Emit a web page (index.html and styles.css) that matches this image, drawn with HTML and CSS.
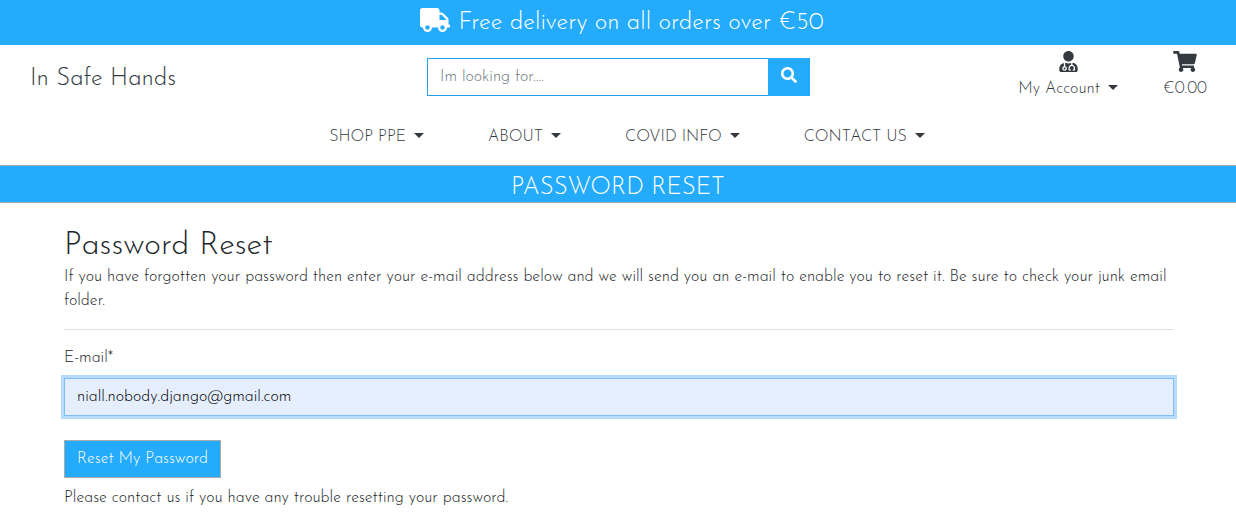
FILE: index.html
```html
<!DOCTYPE html>
<html lang="en">
<head>
<meta charset="utf-8">
<meta name="viewport" content="width=device-width, initial-scale=1">
<title>In Safe Hands</title>
<link rel="stylesheet" href="styles.css">
</head>
<body>
<div class="delivery-banner">
  <svg class="icon-truck" viewBox="0 0 640 512" aria-hidden="true"><path d="M624 352h-16V243.900c0-12.700-5.100-24.900-14.100-33.900L494 110.100c-9-9-21.200-14.100-33.900-14.100H416V48c0-26.500-21.500-48-48-48H48C21.500 0 0 21.500 0 48v320c0 26.500 21.500 48 48 48h16c0 53 43 96 96 96s96-43 96-96h128c0 53 43 96 96 96s96-43 96-96h48c8.800 0 16-7.200 16-16v-32c0-8.800-7.200-16-16-16zM160 464c-26.500 0-48-21.500-48-48s21.500-48 48-48 48 21.500 48 48-21.500 48-48 48zm320 0c-26.500 0-48-21.500-48-48s21.500-48 48-48 48 21.500 48 48-21.500 48-48 48zm80-208H416V144h44.100l99.900 99.900V256z"/></svg>
  <span>Free delivery on all orders over €50</span>
</div>
<header class="site-header">
  <div class="header-top">
    <a class="brand" href="#">In Safe Hands</a>
    <form class="search">
      <input class="search-input" type="text" placeholder="Im looking for...." aria-label="Search">
      <button class="search-button" type="button" aria-label="Submit search">
        <svg class="icon-search" viewBox="0 0 512 512" aria-hidden="true"><path d="M505 442.700L405.300 343c-4.500-4.500-10.600-7-17-7H372c27.600-35.300 44-79.700 44-128C416 93.100 322.900 0 208 0S0 93.100 0 208s93.100 208 208 208c48.300 0 92.700-16.400 128-44v16.300c0 6.400 2.500 12.500 7 17l99.700 99.700c9.400 9.400 24.600 9.400 33.900 0l28.300-28.300c9.400-9.400 9.400-24.600.1-34zM208 336c-70.700 0-128-57.200-128-128 0-70.700 57.200-128 128-128 70.700 0 128 57.200 128 128 0 70.700-57.200 128-128 128z"/></svg>
      </button>
    </form>
    <div class="account-links">
      <button class="account-link" type="button">
        <svg class="icon-user" viewBox="0 0 448 512" aria-hidden="true"><path d="M224 256c70.700 0 128-57.300 128-128S294.700 0 224 0 96 57.300 96 128s57.300 128 128 128zM104 424c0 13.300 10.700 24 24 24s24-10.700 24-24-10.700-24-24-24-24 10.700-24 24zm216-135.400v49c36.500 7.400 64 39.800 64 78.400v41.700c0 7.600-5.400 14.200-12.900 15.700l-32.200 6.400c-4.300.9-8.500-1.900-9.400-6.300l-3.100-15.700c-.9-4.300 1.900-8.600 6.300-9.400l19.300-3.900V416c0-62.800-96-65.100-96 1.900v26.700l19.300 3.900c4.300.9 7.100 5.100 6.300 9.400l-3.100 15.700c-.9 4.300-5.100 7.100-9.400 6.300l-31.200-4.200c-7.900-1.100-13.800-7.800-13.800-15.900V416c0-38.600 27.500-70.900 64-78.400v-45.200c-2.200.7-4.400 1.100-6.600 1.900-18 6.300-37.300 9.800-57.400 9.800s-39.400-3.500-57.400-9.800c-7.400-2.600-14.900-4.200-22.600-5.200v81.600c23.100 6.900 40 28.100 40 53.400 0 30.900-25.100 56-56 56s-56-25.100-56-56c0-25.300 16.900-46.500 40-53.400v-80.400C48.500 301 0 355.800 0 422.400v44.800C0 491.900 20.100 512 44.800 512h358.400c24.700 0 44.800-20.100 44.800-44.800v-44.800c0-72-56.800-130.300-128-133.800z"/></svg>
        <span class="toggle-label">My Account <span class="caret"></span></span>
      </button>
      <a class="account-link" href="#">
        <svg class="icon-cart" viewBox="0 0 576 512" aria-hidden="true"><path d="M528.120 301.319l47.273-208C578.806 78.301 567.391 64 551.990 64H159.208l-9.166-44.810C147.758 8.021 137.930 0 126.529 0H24C10.745 0 0 10.745 0 24v16c0 13.255 10.745 24 24 24h69.883l70.248 343.435C147.325 417.100 136 435.222 136 456c0 30.928 25.072 56 56 56s56-25.072 56-56c0-15.674-6.447-29.835-16.824-40h209.647C430.447 426.165 424 440.326 424 456c0 30.928 25.072 56 56 56s56-25.072 56-56c0-22.172-12.888-41.332-31.579-50.405l5.517-24.276c3.413-15.018-8.002-29.319-23.403-29.319H218.117l-6.545-32h293.145c11.206 0 20.920-7.754 23.403-18.681z"/></svg>
        <span>€0.00</span>
      </a>
    </div>
  </div>
  <nav class="main-nav" aria-label="Main">
    <button class="nav-item toggle-label" type="button">SHOP PPE <span class="caret"></span></button>
    <button class="nav-item toggle-label" type="button">ABOUT <span class="caret"></span></button>
    <button class="nav-item toggle-label" type="button">COVID INFO <span class="caret"></span></button>
    <button class="nav-item toggle-label" type="button">CONTACT US <span class="caret"></span></button>
  </nav>
</header>
<div class="page-title">PASSWORD RESET</div>
<main class="content">
  <h1 class="heading">Password Reset</h1>
  <p class="text">If you have forgotten your password then enter your e-mail address below and we will send you an e-mail to enable you to reset it. Be sure to check your junk email folder.</p>
  <hr class="divider">
  <form class="reset-form">
    <label class="label" for="email">E-mail*</label>
    <input class="email-input" id="email" type="text" inputmode="email" value="niall.nobody.django@gmail.com">
    <button class="reset-button" type="button">Reset My Password</button>
  </form>
  <p class="text">Please contact us if you have any trouble resetting your password.</p>
</main>
<script src="script.js"></script>
</body>
</html>
```

FILE: styles.css
```css
* {
  box-sizing: border-box;
}

body {
  margin: 0;
  background: #fff;
  color: #212529;
  font-family: "Josefin Sans", Lato, sans-serif;
  font-size: 16px;
  font-weight: 300;
  line-height: 24px;
}

button,
input {
  margin: 0;
  border-radius: 0;
  font: inherit;
}

button {
  cursor: pointer;
}

svg {
  display: block;
  fill: currentColor;
}

.delivery-banner {
  display: flex;
  justify-content: center;
  align-items: flex-start;
  gap: 8px;
  padding: 8px 8px 7px 16px;
  background: #24abfc;
  color: #fff;
  font-size: 24px;
  line-height: 30px;
}

.icon-truck {
  width: 30px;
  height: 24px;
}

.site-header {
  color: #343a40;
}

.header-top {
  display: grid;
  grid-template-columns: repeat(3, 1fr);
  align-items: start;
}

.brand {
  padding: 19px 30px 0;
  color: inherit;
  font-size: 24px;
  line-height: 30px;
  text-decoration: none;
}

.search {
  display: flex;
  padding: 13px 14px 0 15px;
}

.search-input {
  flex: 1;
  min-width: 0;
  height: 38px;
  padding: 0 12px;
  border: 1px solid #24a0ed;
  border-right: 0;
  background: #fff;
  color: #495057;
}

.search-input::placeholder {
  color: #6c757d;
  opacity: 1;
}

.search-button {
  display: flex;
  justify-content: center;
  align-items: center;
  width: 42px;
  padding: 0 0 4px;
  border: 0;
  background: #24abfc;
  color: #fff;
}

.icon-search {
  width: 16px;
  height: 16px;
}

.account-links {
  display: flex;
  justify-content: flex-end;
  gap: 45px;
  padding: 6px 29px 0 0;
}

.account-link {
  display: flex;
  flex-direction: column;
  align-items: center;
  gap: 5px;
  padding: 0;
  border: 0;
  background: none;
  color: inherit;
  text-decoration: none;
}

.icon-user {
  width: 19px;
  height: 21px;
}

.icon-cart {
  width: 24px;
  height: 21px;
}

.toggle-label {
  display: flex;
  align-items: center;
  gap: 8px;
}

.caret {
  margin-bottom: 4px;
  border: 5px solid transparent;
  border-top-color: currentColor;
  border-bottom: 0;
}

.main-nav {
  display: flex;
  justify-content: center;
  gap: 64px;
  padding: 24px 0 16px 18px;
}

.nav-item {
  padding: 0;
  border: 0;
  background: none;
  color: inherit;
}

.page-title {
  padding: 8px 16px 0;
  border: 1px solid #aaa;
  border-width: 1px 0;
  background: #24abfc;
  color: #fff;
  font-size: 24px;
  line-height: 28px;
  text-align: center;
}

.content {
  padding: 24px 62px 0 64px;
}

.heading {
  margin: 0;
  font-size: 32px;
  font-weight: 300;
  line-height: 38px;
}

.text {
  margin: 0;
}

.divider {
  margin: 16px 0;
  border: 0;
  border-top: 1px solid #dedede;
}

.reset-form {
  display: flex;
  flex-direction: column;
  align-items: flex-start;
  margin-bottom: 8px;
}

.label {
  margin-bottom: 8px;
}

.email-input {
  width: 100%;
  height: 38px;
  margin-bottom: 24px;
  padding: 0 12px;
  border: 1px solid #80bdff;
  outline: 0;
  background: #e5eefd;
  box-shadow: 0 0 0 3px #b8dbfb;
  color: #000;
}

.reset-button {
  height: 38px;
  padding: 0 12px;
  border: 1px solid #aaa;
  background: #24abfc;
  color: #fff;
}
```

FILE: script.js
```js
// Start with the cursor at the end of the prefilled address.
const email = document.getElementById("email");
email.focus();
email.setSelectionRange(email.value.length, email.value.length);
```
